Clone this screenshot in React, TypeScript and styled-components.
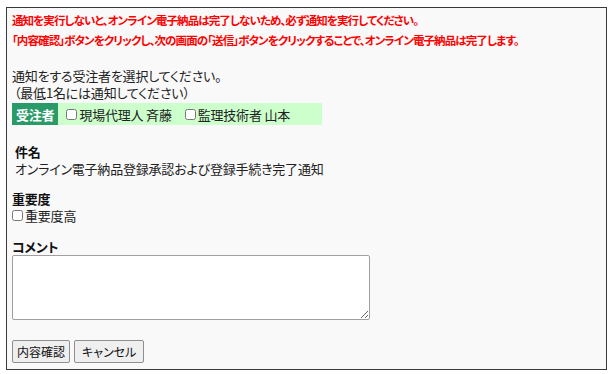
import React from 'react';
import styled, { createGlobalStyle } from 'styled-components';

const GlobalStyle = createGlobalStyle`
  html, body {
    margin: 0;
    padding: 0;
    background: #ffffff;
  }
  body {
    font-family: "Noto Sans CJK JP", "Noto Sans", sans-serif;
    font-size: 13px;
    letter-spacing: -0.2px;
    color: #222;
    font-feature-settings: "palt";
  }
`;

const Frame = styled.div`
  box-sizing: border-box;
  width: 601px;
  height: 363px;
  margin: 7px 0 0 6px;
  padding: 2px 5px 0;
  border: 1px solid #3a3a3a;
  background: #f9f9f9;
  overflow: hidden;
`;

const Warning = styled.p`
  margin: 0;
  color: #ff0000;
  font-size: 11.5px;
  font-weight: bold;
  letter-spacing: -0.9px;
  line-height: 20px;
  white-space: nowrap;
`;

const Instruction = styled.p`
  margin: 17px 0 0;
  line-height: 17px;
`;

const Note = styled.span`
  display: block;
  padding-left: 2px;
`;

const RecipientRow = styled.div`
  display: flex;
  align-items: center;
  width: 310px;
  height: 22px;
  margin-top: 2px;
  background: #ccffcc;
`;

const RecipientLabel = styled.span`
  display: flex;
  align-items: center;
  height: 100%;
  padding: 0 4px;
  background: #2a9a68;
  color: #ffffff;
  font-weight: bold;
`;

const Choice = styled.label<{ $gap?: number }>`
  display: inline-flex;
  align-items: center;
  margin-left: ${(p) => p.$gap ?? 8}px;
  white-space: nowrap;
`;

const Box = styled.input.attrs({ type: 'checkbox' })`
  width: 11px;
  height: 11px;
  margin: 0 2px 0 0;
`;

const Section = styled.div<{ $top: number; $indent?: number }>`
  margin-top: ${(p) => p.$top}px;
  padding-left: ${(p) => p.$indent ?? 0}px;
  line-height: 17px;
`;

const Heading = styled.div`
  font-weight: bold;
  color: #111;
`;

const Comment = styled.textarea`
  display: block;
  box-sizing: border-box;
  width: 358px;
  height: 65px;
  margin: 0;
  border: 1px solid #a0a0a0;
  border-radius: 2px;
  background: #ffffff;
  font: inherit;
`;

const Actions = styled.div`
  display: flex;
  gap: 4px;
  margin-top: 20px;
`;

const Button = styled.button<{ $pad?: number }>`
  box-sizing: border-box;
  height: 23px;
  padding: 0 ${(p) => p.$pad ?? 4}px;
  border: 1px solid #8f8f8f;
  border-radius: 2px;
  background: #efefef;
  color: #111;
  font: inherit;
  font-size: 12px;
  cursor: pointer;
`;

export default function App() {
  return (
    <>
      <GlobalStyle />
      <Frame>
        <Warning>
          通知を実行しないと、オンライン電子納品は完了しないため、必ず通知を実行してください。
          <br />
          「内容確認」ボタンをクリックし、次の画面の「送信」ボタンをクリックすることで、オンライン電子納品は完了します。
        </Warning>
        <Instruction>
          通知をする受注者を選択してください。
          <Note>（最低1名には通知してください）</Note>
        </Instruction>
        <RecipientRow>
          <RecipientLabel>受注者</RecipientLabel>
          <Choice>
            <Box />
            現場代理人 斉藤
          </Choice>
          <Choice $gap={13}>
            <Box />
            監理技術者 山本
          </Choice>
        </RecipientRow>
        <Section $top={18} $indent={3}>
          <Heading>件名</Heading>
          <div>オンライン電子納品登録承認および登録手続き完了通知</div>
        </Section>
        <Section $top={13}>
          <Heading>重要度</Heading>
          <Choice $gap={0}>
            <Box />
            重要度高
          </Choice>
        </Section>
        <Section $top={14}>
          <Heading>コメント</Heading>
          <Comment />
        </Section>
        <Actions>
          <Button $pad={4}>内容確認</Button>
          <Button $pad={7}>キャンセル</Button>
        </Actions>
      </Frame>
    </>
  );
}
